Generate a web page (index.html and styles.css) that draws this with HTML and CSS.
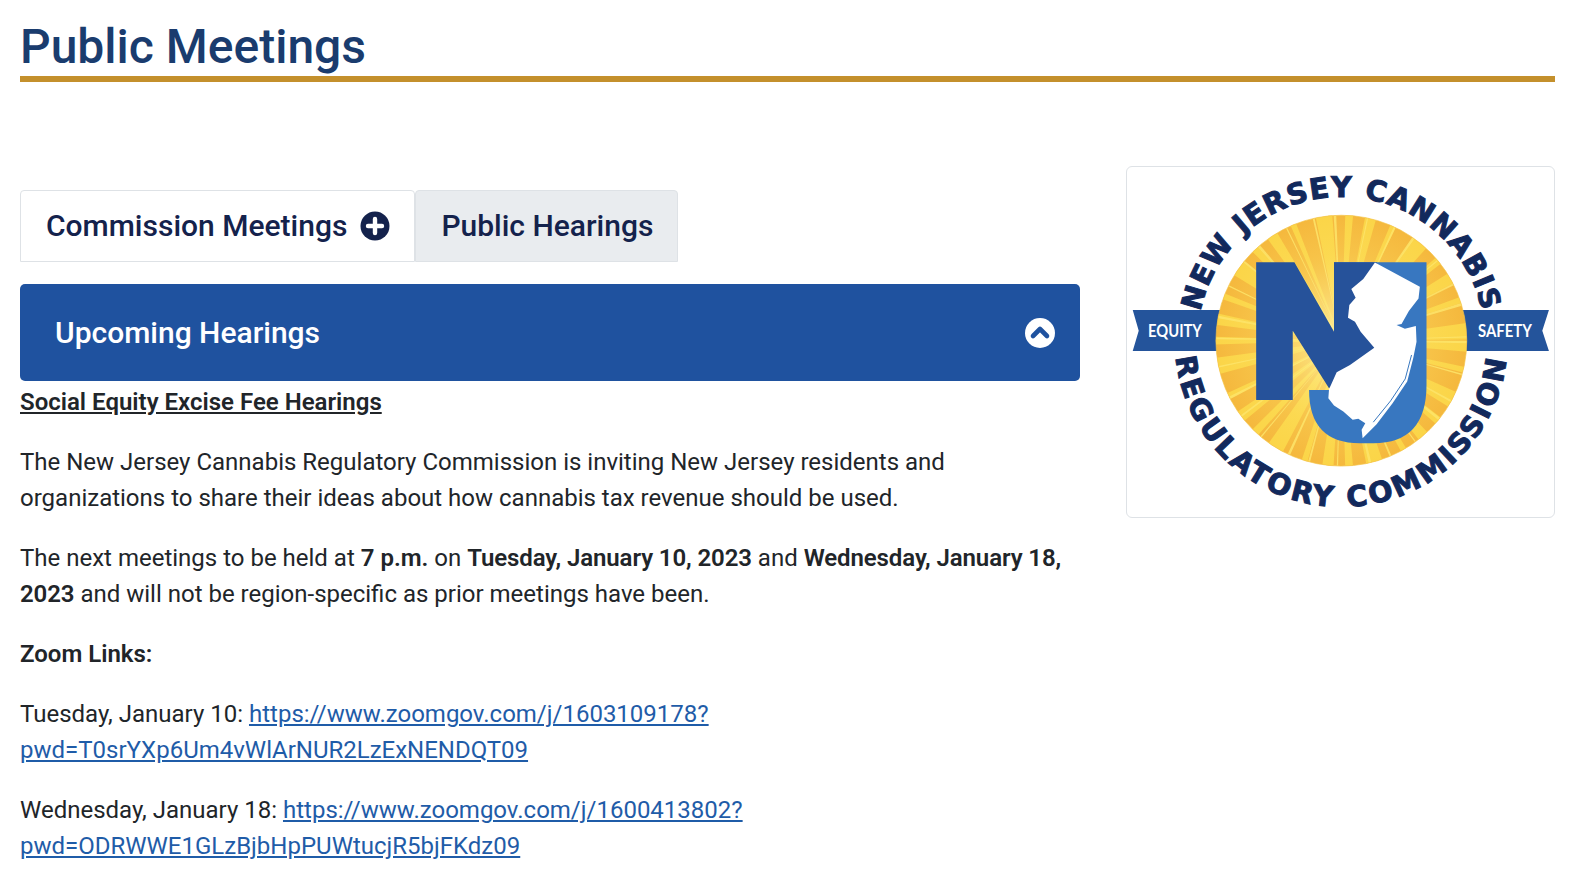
FILE: index.html
```html
<!DOCTYPE html>
<html lang="en">
<head>
    <meta charset="UTF-8">
    <meta name="viewport" content="width=device-width, initial-scale=1.0">
    <title>Public Meetings</title>
    <link rel="stylesheet" href="styles.css">
</head>
<body>
    <h1 class="page-title">Public Meetings</h1>

    <div class="columns">
        <main class="content">
            <div class="tabs">
                <a class="tab tab-active" href="#commission">
                    Commission Meetings
                    <svg class="tab-icon" viewBox="0 0 30 30" aria-hidden="true">
                        <circle cx="15" cy="15" r="14.5" fill="#14224c"/>
                        <path d="M15 8v14M8 15h14" stroke="#fff" stroke-width="4.4" stroke-linecap="round"/>
                    </svg>
                </a>
                <a class="tab" href="#hearings">Public Hearings</a>
            </div>

            <div class="panel-header">
                <span>Upcoming Hearings</span>
                <svg class="panel-icon" viewBox="0 0 30 30" aria-hidden="true">
                    <circle cx="15" cy="15" r="15" fill="#fff"/>
                    <path d="M8 18l7-7 7 7" fill="none" stroke="#1f529f" stroke-width="4.6" stroke-linecap="round" stroke-linejoin="round"/>
                </svg>
            </div>

            <p class="lead-title"><strong><u>Social Equity Excise Fee Hearings</u></strong></p>
            <p>The New Jersey Cannabis Regulatory Commission is inviting New Jersey residents and organizations to share their ideas about how cannabis tax revenue should be used.</p>
            <p>The next meetings to be held at <strong>7 p.m.</strong> on <strong class="date">Tuesday, January 10, 2023</strong> and <strong class="date">Wednesday, January 18, 2023</strong> and will not be region-specific as prior meetings have been.</p>
            <p><strong>Zoom Links:</strong></p>
            <p>Tuesday, January 10: <a href="#zoom1">https://www.zoomgov.com/j/1603109178?<wbr>pwd=T0srYXp6Um4vWlArNUR2LzExNENDQT09</a></p>
            <p>Wednesday, January 18: <a href="#zoom2">https://www.zoomgov.com/j/1600413802?<wbr>pwd=ODRWWE1GLzBjbHpPUWtucjR5bjFKdz09</a></p>
        </main>

        <aside class="logo-card">
            <svg class="logo" viewBox="50 35 1283 1052" role="img" aria-label="New Jersey Cannabis Regulatory Commission logo">
                <defs>
                    <path id="arc-top" d="M262 557A432 432 0 0 1 1126 557"/>
                    <path id="arc-bottom" d="M194 557A500 500 0 0 0 1194 557"/>
                    <clipPath id="sun-clip"><circle cx="694" cy="557" r="377"/></clipPath>
                    <radialGradient id="sun-glow">
                        <stop offset="0" stop-color="#fff6b0" stop-opacity=".9"/>
                        <stop offset=".7" stop-color="#fde46a" stop-opacity=".25"/>
                        <stop offset="1" stop-color="#fde46a" stop-opacity="0"/>
                    </radialGradient>
                </defs>

                <!-- ribbons -->
                <polygon class="ribbon" points="67,465 340,465 340,588 67,588 85,527"/>
                <polygon class="ribbon" points="1050,465 1318,465 1298,527 1318,588 1050,588"/>
                <text class="ribbon-text" x="113" y="546" textLength="162" lengthAdjust="spacingAndGlyphs">EQUITY</text>
                <text class="ribbon-text" x="1105" y="546" textLength="162" lengthAdjust="spacingAndGlyphs">SAFETY</text>

                <!-- sun, rays are dashes on a fat circle stroke -->
                <circle cx="694" cy="557" r="377" fill="#f5b83d"/>
                <g clip-path="url(#sun-clip)" fill="none">
                    <circle cx="694" cy="557" r="190" stroke="#fbd548" stroke-width="380" stroke-dasharray="17 23 9 31 25 20 12 18"/>
                    <circle cx="694" cy="557" r="190" stroke="#fde46a" stroke-width="380" stroke-dasharray="4 47 2 41 3 29" opacity=".85"/>
                </g>
                <circle cx="694" cy="557" r="377" fill="url(#sun-glow)"/>
                <circle cx="694" cy="557" r="377" fill="none" stroke="#f4c64d" stroke-width="2"/>

                <!-- NJ letters and the state -->
                <path class="letter-j" d="M672 321H950V690Q950 865 790 865H750Q597 865 597 705H672Z"/>
                <path class="letter-n" d="M438 321H553L672 530V321H800L860 480 794 580 657 700 548 527V735H438Z"/>
                <path class="state" d="M795 322L930 395 926 430 897 468 875 507 860 510 885 521 918 513 920 560 910 610 892 680 848 745 800 808 758 850 755 825 766 805 745 792 728 795 700 770 672 752 655 730 657 703 680 652 720 630 793 578 752 530 735 500 714 488 718 450 737 428 724 402 760 372Z"/>
                <path class="coast" d="M905 600L886 672 842 738 790 802"/>

                <!-- arc lettering -->
                <text class="arc-text arc-text-top"><textPath href="#arc-top" startOffset="50%" text-anchor="middle">NEW JERSEY CANNABIS</textPath></text>
                <text class="arc-text arc-text-bottom"><textPath href="#arc-bottom" startOffset="50%" text-anchor="middle">REGULATORY COMMISSION</textPath></text>
            </svg>
        </aside>
    </div>
</body>
</html>
```

FILE: styles.css
```css
html, body {
    height: 100%;
}
body {
    font-family: Roboto, "Liberation Sans", sans-serif;
    background-color: #fff;
    color: #212529;
    margin: 0;
    padding: 0 27px 0 20px;
    font-size: 24px;
    line-height: 36px;
    overflow: hidden;
}
.page-title {
    margin: 0;
    padding-top: 17px;
    height: 59px;
    line-height: 59px;
    font-size: 48px;
    font-weight: 500;
    color: #1a3c6e;
    border-bottom: 6px solid #c4902c;
    box-sizing: content-box;
}
.columns {
    display: grid;
    grid-template-columns: 1060px 429px;
    justify-content: space-between;
    align-items: start;
    margin-top: 84px;
}
.content {
    padding-top: 24px;
}
.tabs {
    display: flex;
}
.tab {
    display: flex;
    align-items: center;
    gap: 13px;
    height: 72px;
    box-sizing: border-box;
    padding: 0 24px 0 25px;
    font-size: 30px;
    font-weight: 500;
    color: #14224c;
    text-decoration: none;
    background-color: #e9ecef;
    border: 1px solid #dee2e6;
    border-radius: 4px 4px 0 0;
}
.tab-active {
    background-color: #fff;
}
.tab-icon {
    width: 30px;
    height: 30px;
}
.panel-header {
    display: flex;
    justify-content: space-between;
    align-items: center;
    height: 97px;
    margin-top: 22px;
    padding: 0 25px 0 35px;
    background-color: #1f529f;
    color: #fff;
    font-size: 30px;
    font-weight: 500;
    border-radius: 5px;
}
.panel-icon {
    width: 30px;
    height: 30px;
}
p {
    margin: 0 0 24px;
}
strong {
    font-weight: 600;
}
.date {
    letter-spacing: -0.1px;
}
.lead-title {
    margin-top: 3px;
}
a {
    color: #1f5ca8;
}
.logo-card {
    height: 352px;
    box-sizing: border-box;
    background-color: #fff;
    border: 1px solid #dee2e6;
    border-radius: 6px;
}
.logo {
    display: block;
    width: 100%;
    height: 100%;
}
.ribbon {
    fill: #24549b;
}
.ribbon-text {
    font-family: Lato, "Open Sans", sans-serif;
    font-size: 50px;
    font-weight: 700;
    fill: #fff;
}
.letter-n {
    fill: #26529a;
}
.letter-j {
    fill: #3877c0;
}
.state {
    fill: #fff;
}
.coast {
    fill: none;
    stroke: #3877c0;
    stroke-width: 3px;
}
.arc-text {
    font-family: "DejaVu Sans", sans-serif;
    font-size: 86px;
    font-weight: 700;
    fill: #12295c;
    stroke: #12295c;
    stroke-width: 3px;
}
.arc-text-top {
    letter-spacing: 3px;
}
.arc-text-bottom {
    letter-spacing: 8px;
}
```
